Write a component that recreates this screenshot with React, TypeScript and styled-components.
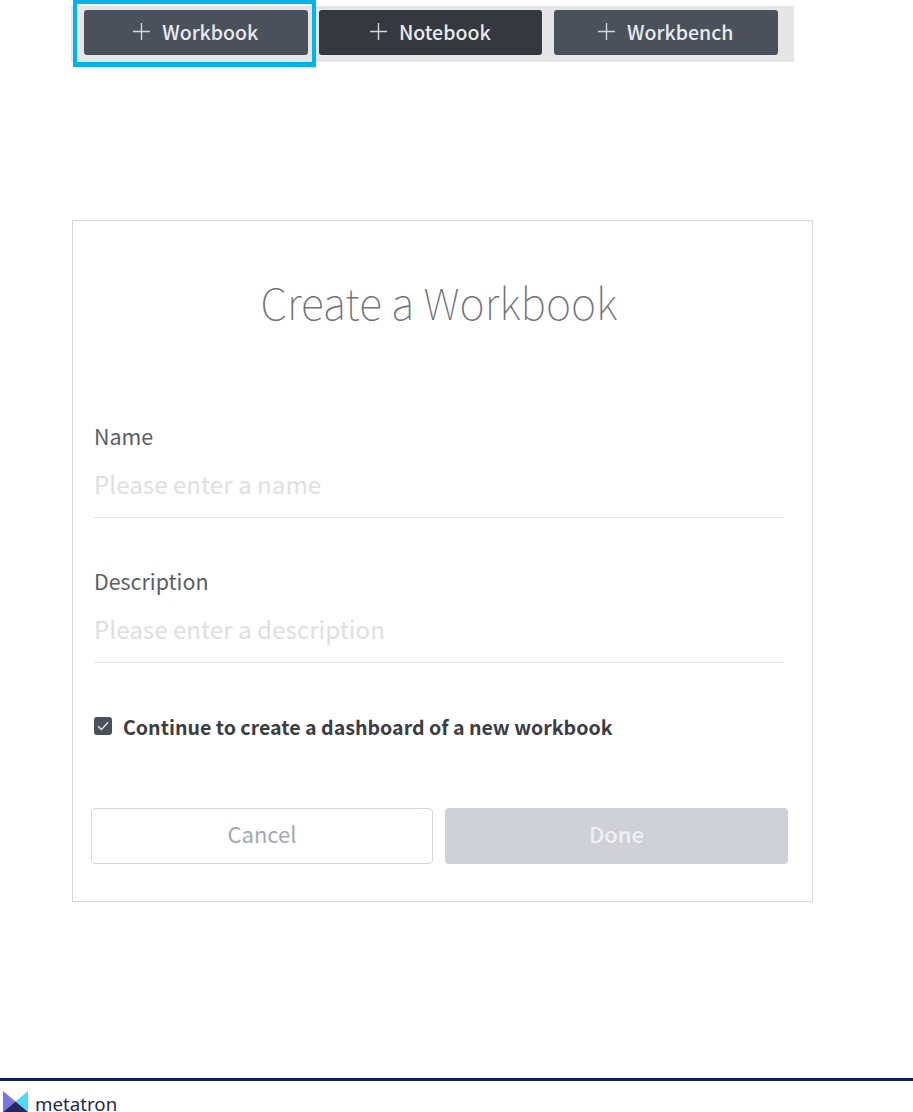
import React from "react";
import styled, { createGlobalStyle } from "styled-components";

const FONT = `"Noto Sans CJK KR", "Noto Sans", sans-serif`;

const PlusIcon = () => (
  <svg width="17" height="17" viewBox="0 0 17 17">
    <path d="M8.5 0v17M0 8.5h17" stroke="#d4d6da" strokeWidth="1.4" fill="none" />
  </svg>
);

const App = () => {
  return (
    <Page>
      <GlobalStyle />
      <Toolbar>
        <Highlight />
        <CreateButton $gap={11}>
          <PlusIcon />
          Workbook
        </CreateButton>
        <CreateButton $dark $gap={12}>
          <PlusIcon />
          Notebook
        </CreateButton>
        <CreateButton>
          <PlusIcon />
          Workbench
        </CreateButton>
      </Toolbar>

      <Card>
        <Title>Create a Workbook</Title>
        <Field>
          <Label>Name</Label>
          <TextInput placeholder="Please enter a name" />
        </Field>
        <Field>
          <Label>Description</Label>
          <TextInput placeholder="Please enter a description" />
        </Field>
        <CheckRow>
          <CheckBox>
            <svg width="12" height="10" viewBox="0 0 12 10">
              <path d="M1 5.2l3.4 3.4L11 1.2" stroke="#e4e5e8" strokeWidth="1.4" fill="none" />
            </svg>
          </CheckBox>
          Continue to create a dashboard of a new workbook
        </CheckRow>
        <Actions>
          <CancelButton>Cancel</CancelButton>
          <DoneButton>Done</DoneButton>
        </Actions>
      </Card>

      <Footer>
        <svg width="25" height="21" viewBox="0 0 25 21">
          <path d="M0 0l12.5 10.5L0 21z" fill="#7575e6" />
          <path d="M25 0L12.5 10.5 25 21z" fill="#48dcf6" />
          <path d="M0 21l12.5-10.5L25 21z" fill="#28285c" />
        </svg>
        <Brand>metatron</Brand>
      </Footer>
    </Page>
  );
};

export default App;

const GlobalStyle = createGlobalStyle`
  html, body {
    margin: 0;
    padding: 0;
    background: #fff;
    overflow: hidden;
  }
  * {
    box-sizing: border-box;
  }
`;

const Page = styled.div`
  position: relative;
  width: 913px;
  height: 1112px;
  padding-top: 6px;
  overflow: hidden;
  font-family: ${FONT};
`;

const Toolbar = styled.div`
  position: relative;
  display: flex;
  width: 723px;
  height: 56px;
  margin-left: 71px;
  padding: 4px 0 0 13px;
  background: #e6e6e8;
`;

const Highlight = styled.div`
  position: absolute;
  left: 2px;
  top: -6px;
  width: 243px;
  height: 67px;
  border: 4px solid #00b4f0;
  border-bottom-width: 5px;
`;

const CreateButton = styled.button<{ $dark?: boolean; $gap?: number }>`
  display: flex;
  align-items: center;
  justify-content: center;
  gap: 12px;
  width: 223.5px;
  height: 45px;
  margin-right: ${(p) => p.$gap || 0}px;
  padding: 0 0 3px;
  border: 0;
  border-radius: 3px;
  background: ${(p) => (p.$dark ? "#36383f" : "#4b515b")};
  color: #e8ebee;
  font-family: ${FONT};
  font-size: 19.5px;
  font-weight: 500;
`;

const Card = styled.div`
  width: 741px;
  height: 682px;
  margin: 158px 0 0 72px;
  padding: 52px 28px 0 21px;
  border: 1px solid #d8d8d8;
`;

const Title = styled.h1`
  margin: 0 0 92px;
  color: #6f727c;
  font-family: ${FONT};
  font-size: 42.8px;
  font-weight: 100;
  line-height: 56px;
  text-align: center;
`;

const Field = styled.div`
  display: flex;
  flex-direction: column;
  height: 145px;
`;

const Label = styled.label`
  height: 30px;
  color: #5a5d67;
  font-size: 21.4px;
  line-height: 30px;
`;

const TextInput = styled.input`
  width: 690px;
  height: 67px;
  padding: 0 0 1px;
  border: 0;
  border-bottom: 1px solid #e4e4e8;
  outline: 0;
  font-family: ${FONT};
  font-size: 24.2px;

  &::placeholder {
    color: #dedee3;
    opacity: 1;
  }
`;

const CheckRow = styled.div`
  display: flex;
  align-items: center;
  gap: 11px;
  height: 30px;
  color: #3b3d45;
  font-size: 19.6px;
  font-weight: 700;
`;

const CheckBox = styled.span`
  display: flex;
  align-items: center;
  justify-content: center;
  width: 18px;
  height: 18px;
  border-radius: 3px;
  background: #4b515b;
`;

const Actions = styled.div`
  display: flex;
  gap: 12px;
  width: 697px;
  margin: 66px 0 0 -3px;
`;

const CancelButton = styled.button`
  flex: none;
  width: 342px;
  height: 56px;
  margin-top: 1px;
  padding: 0 0 7px;
  border: 1px solid #d4d5da;
  border-radius: 4px;
  background: #fff;
  color: #a3a8b4;
  font-family: ${FONT};
  font-size: 22px;
`;

const DoneButton = styled(CancelButton)`
  width: 343px;
  border: 0;
  background: #d0d1d8;
  color: #eef0f4;
  font-weight: 500;
`;

const Footer = styled.div`
  display: flex;
  align-items: flex-start;
  gap: 7px;
  height: 34px;
  margin-top: 176px;
  padding: 10px 0 0 3px;
  border-top: 3px solid #0b2260;
`;

const Brand = styled.span`
  color: #23284f;
  font-family: "Noto Sans", sans-serif;
  font-size: 18.7px;
  line-height: 26px;
`;
